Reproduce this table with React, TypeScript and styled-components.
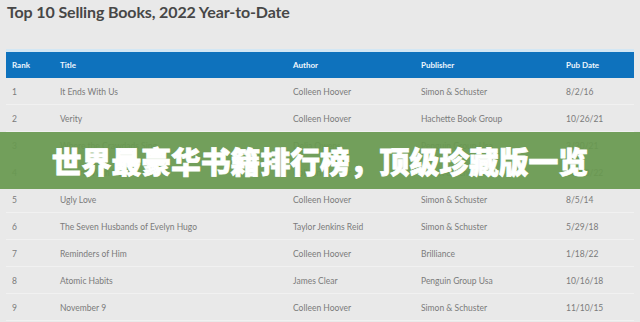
import React from "react";
import styled, { createGlobalStyle } from "styled-components";

const Global = createGlobalStyle`
  html, body { margin: 0; padding: 0; }
  body { background: #e9e9e9; width: 640px; height: 322px; overflow: hidden; }
  #root { width: 640px; height: 322px; }
`;

const Page = styled.div`
  position: relative;
  width: 640px;
  height: 322px;
  overflow: hidden;
  background: #e9e9e9;
  font-family: Lato, "Open Sans", "Liberation Sans", sans-serif;
  display: flex;
  flex-direction: column;
`;

const Heading = styled.h1`
  margin: 0;
  padding: 1px 0 0 7px;
  height: 49px;
  box-sizing: border-box;
  font-family: Lato, "Open Sans", sans-serif;
  font-weight: 700;
  font-size: 16px;
  letter-spacing: -0.13px;
  line-height: 22px;
  color: #474747;
`;

const Table = styled.div`
  margin: 0 6px;
  display: flex;
  flex-direction: column;
`;

const cols = "48px 233px 128px 145px 1fr";

const HeaderRow = styled.div`
  display: grid;
  grid-template-columns: ${cols};
  align-items: center;
  height: 26px;
  padding-left: 6px;
  background: #0e72bd;
  border-top: 3px solid #d3e7f4;
  color: #eef6fd;
  font-weight: 700;
  font-size: 8px;
`;

const Row = styled.div`
  display: grid;
  grid-template-columns: ${cols};
  align-items: center;
  height: 27px;
  box-sizing: border-box;
  padding-left: 6px;
  padding-top: 1px;
  border-bottom: 1px solid #f1f1f1;
  color: #7b7b7b;
  font-size: 8.5px;
`;

const Cell = styled.span`
  white-space: nowrap;
`;

const Banner = styled.div`
  position: absolute;
  left: 0;
  right: 0;
  top: 132px;
  height: 57px;
  background: rgba(104, 153, 80, 0.93);
  display: flex;
  align-items: center;
  justify-content: center;
  color: #ffffff;
  font-family: "Noto Sans CJK SC", "Noto Sans", sans-serif;
  font-weight: 900;
  font-size: 29.8px;
  line-height: 1;
  -webkit-text-stroke: 0.8px #ffffff;
`;

const rows = [
  ["1", "It Ends With Us", "Colleen Hoover", "Simon & Schuster", "8/2/16"],
  ["2", "Verity", "Colleen Hoover", "Hachette Book Group", "10/26/21"],
  ["3", "Where the Crawdads Sing", "Delia Owens", "Penguin Group Usa", "3/30/21"],
  ["4", "It Starts With Us", "Colleen Hoover", "Simon & Schuster", "10/18/22"],
  ["5", "Ugly Love", "Colleen Hoover", "Simon & Schuster", "8/5/14"],
  ["6", "The Seven Husbands of Evelyn Hugo", "Taylor Jenkins Reid", "Simon & Schuster", "5/29/18"],
  ["7", "Reminders of Him", "Colleen Hoover", "Brilliance", "1/18/22"],
  ["8", "Atomic Habits", "James Clear", "Penguin Group Usa", "10/16/18"],
  ["9", "November 9", "Colleen Hoover", "Simon & Schuster", "11/10/15"],
];

export default function App() {
  return (
    <>
      <Global />
      <Page>
        <Heading>Top 10 Selling Books, 2022 Year-to-Date</Heading>
        <Table>
          <HeaderRow>
            <Cell>Rank</Cell>
            <Cell>Title</Cell>
            <Cell>Author</Cell>
            <Cell>Publisher</Cell>
            <Cell>Pub Date</Cell>
          </HeaderRow>
          {rows.map((r) => (
            <Row key={r[0]}>
              {r.map((c, i) => (
                <Cell key={i}>{c}</Cell>
              ))}
            </Row>
          ))}
        </Table>
        <Banner>世界最豪华书籍排行榜，顶级珍藏版一览</Banner>
      </Page>
    </>
  );
}
